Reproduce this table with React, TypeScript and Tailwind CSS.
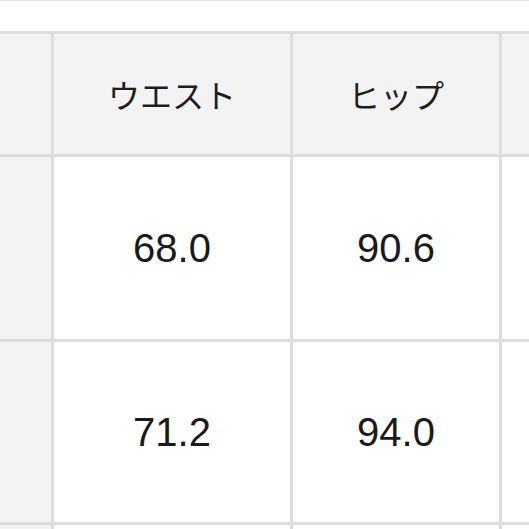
import React from "react";

const jp = { fontFamily: '"Noto Sans CJK JP", "Noto Sans", sans-serif' };
const num = { fontFamily: '"Liberation Sans", Arial, sans-serif' };

export default function App() {
  const rows = [
    ["68.0", "90.6"],
    ["71.2", "94.0"],
    ["", ""],
  ];
  return (
    <div className="w-[529px] h-[529px] overflow-hidden bg-white">
      <div className="h-px bg-[#e2e2e2]" />
      <div className="h-[30px] bg-white" />
      <div className="bg-[#dddddd] pt-[3px]">
        <div className="grid grid-cols-[51px_236px_206px_100px] grid-rows-[120px_182px_180px_60px] gap-[3px] w-[602px]">
          <div className="bg-[#f3f3f3]" />
          <div className="bg-[#f3f3f3] flex items-center justify-center text-[32px] text-[#1e1e1e]" style={jp}>
            ウエスト
          </div>
          <div className="bg-[#f3f3f3] flex items-center justify-center text-[32px] text-[#1e1e1e]" style={jp}>
            ヒップ
          </div>
          <div className="bg-[#f3f3f3]" />
          {rows.map((r, i) => (
            <React.Fragment key={i}>
              <div className="bg-[#f4f4f4]" />
              <div className="bg-white flex items-center justify-center text-[40px] text-[#1a1a1a]" style={num}>
                {r[0]}
              </div>
              <div className="bg-white flex items-center justify-center text-[40px] text-[#1a1a1a]" style={num}>
                {r[1]}
              </div>
              <div className="bg-white" />
            </React.Fragment>
          ))}
        </div>
      </div>
    </div>
  );
}
